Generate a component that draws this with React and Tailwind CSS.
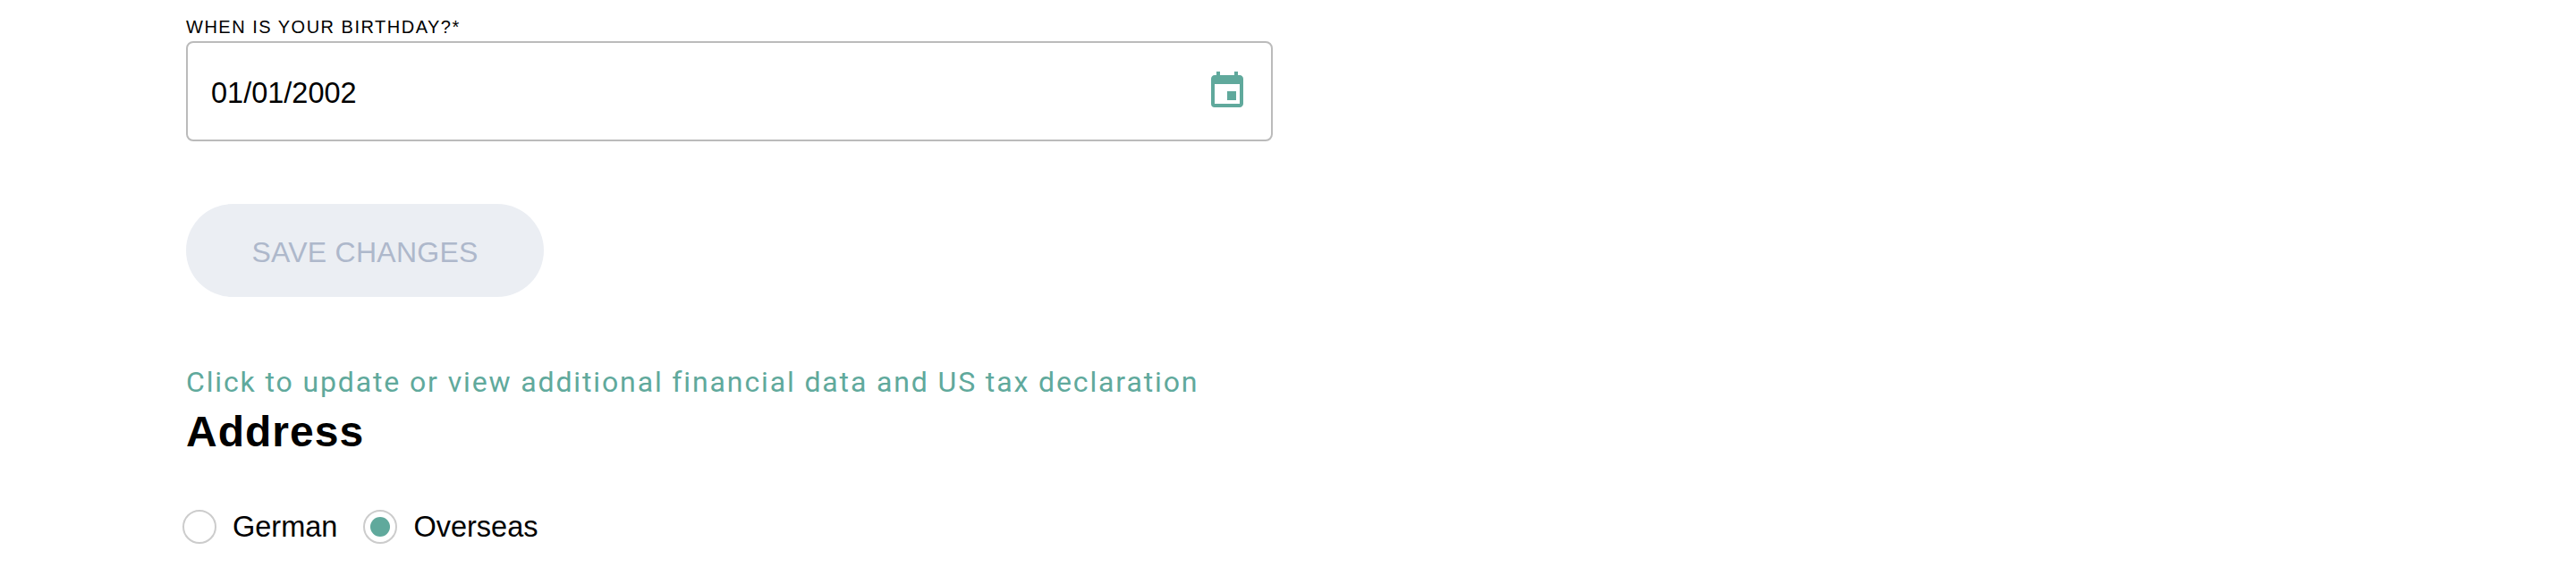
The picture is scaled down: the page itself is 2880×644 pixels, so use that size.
import { MdEvent } from 'react-icons/md';

const sans = "font-['Liberation_Sans',Arial,sans-serif]";

function Radio({ label, checked }) {
  return (
    <label className="flex items-center gap-[18px]">
      <span className="flex h-[38px] w-[38px] items-center justify-center rounded-full border-2 border-[#cccccc] bg-white">
        {checked && <span className="h-[22px] w-[22px] rounded-full bg-[#60a99c]" />}
      </span>
      <span className="text-[32.5px] leading-[38px] text-black">{label}</span>
    </label>
  );
}

export default function App() {
  return (
    <div className={`${sans} h-[644px] overflow-hidden bg-white pl-[208px] text-black`}>
      <div className="w-[1215px]">
        <label className="block h-[46px] pt-[18px] text-[20px] leading-[24px] tracking-[1.5px]">WHEN IS YOUR BIRTHDAY?*</label>
        <div className="flex h-[112px] items-center justify-between rounded-lg border-2 border-[#bbbbbb] pl-[26px] pr-[25px]">
          <span className="pt-[3px] text-[32.5px] leading-[40px]">01/01/2002</span>
          <MdEvent className="h-12 w-12 text-[#60a99c]" />
        </div>
      </div>

      <button className="mt-[70px] h-[104px] w-[400px] rounded-full bg-[#ebeef3] pt-[3px] text-[32px] tracking-[0.25px] text-[#aeb8cb]">
        SAVE CHANGES
      </button>

      <div className="mt-[75px] font-['Roboto',sans-serif] text-[32px] leading-[40px] tracking-[1.87px] text-[#60a99c]">
        Click to update or view additional financial data and US tax declaration
      </div>
      <h2 className="mt-[8px] text-[48px] font-bold leading-[56px] tracking-[1px]">Address</h2>

      <div className="-ml-1 mt-[59px] flex gap-[29px]">
        <Radio label="German" />
        <Radio label="Overseas" checked />
      </div>
    </div>
  );
}
